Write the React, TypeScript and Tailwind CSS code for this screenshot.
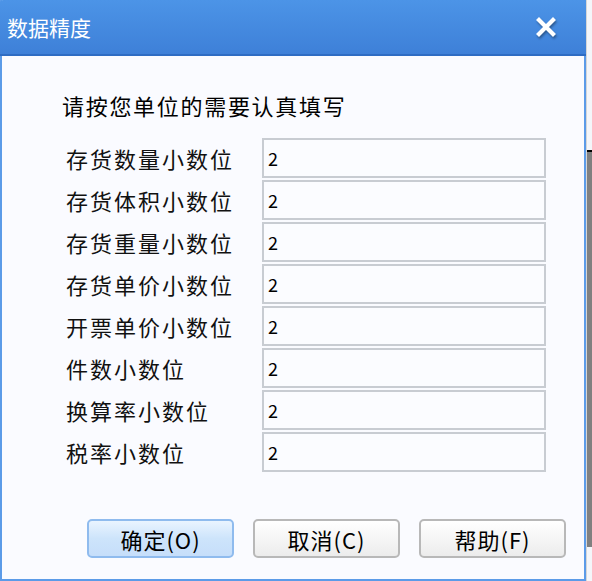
import React from 'react';

const rows = [
  '存货数量小数位',
  '存货体积小数位',
  '存货重量小数位',
  '存货单价小数位',
  '开票单价小数位',
  '件数小数位',
  '换算率小数位',
  '税率小数位',
];

const font = { fontFamily: '"Noto Sans CJK SC", "Liberation Sans", sans-serif' };

export default function App() {
  return (
    <div className="flex w-[592px] h-[581px] bg-[#f0f0f0] overflow-hidden" style={font}>
      {/* Dialog */}
      <div className="flex flex-col w-[586px] h-[581px] bg-[#fafbff] border-l-2 border-r-2 border-b-2 border-[#5b9be8]">
        {/* Title bar */}
        <div className="flex items-center justify-between h-[56px] -mx-[2px] pl-[7px] pr-[30px] bg-gradient-to-b from-[#4c94e7] to-[#3e80d8] border-b-2 border-[#2e6cc3] rounded-tl-[3px]">
          <span className="text-[21px] text-white leading-none">数据精度</span>
          <svg width="20" height="20" viewBox="0 0 20 20" className="drop-shadow-[1px_2px_1px_rgba(0,0,0,0.35)]">
            <path d="M3 3 L17 17 M17 3 L3 17" stroke="#ffffff" strokeWidth="4.2" strokeLinecap="square" />
          </svg>
        </div>

        {/* Body */}
        <div className="flex flex-col flex-1 pl-[60px] pt-[34px]">
          <div className="text-[22px] leading-[30px] text-black tracking-[1.7px]">请按您单位的需要认真填写</div>
          <div className="flex flex-col gap-[2px] mt-[18px] pl-[4px]">
            {rows.map((r) => (
              <div key={r} className="flex items-center h-[40px]">
                <span className="w-[196px] text-[22px] text-[#111] tracking-[2px] leading-none">{r}</span>
                <div className="flex items-center w-[284px] h-[40px] border-2 border-[#c8ccd2] bg-[#fbfcff] pl-[4px] text-[18px] text-black leading-none">
                  2
                </div>
              </div>
            ))}
          </div>

          {/* Buttons */}
          <div className="flex gap-[19px] mt-[47px] pl-[25px]">
            <button className="w-[147px] h-[39px] rounded-[5px] border-2 border-[#8fbbee] bg-gradient-to-b from-[#eaf4ff] via-[#cde4fb] to-[#c6defa] text-[22px] tracking-[1px] text-black leading-none">
              确定(O)
            </button>
            <button className="w-[147px] h-[39px] rounded-[5px] border-2 border-[#b8b8b8] bg-gradient-to-b from-[#ffffff] to-[#ececec] text-[22px] tracking-[1px] text-black leading-none">
              取消(C)
            </button>
            <button className="w-[147px] h-[39px] rounded-[5px] border-2 border-[#b8b8b8] bg-gradient-to-b from-[#ffffff] to-[#ececec] text-[22px] tracking-[1px] text-black leading-none">
              帮助(F)
            </button>
          </div>
        </div>
      </div>

      {/* Right background strip */}
      <div className="flex flex-col w-[6px] h-[581px] bg-[#f4f6fa] border-l border-[#d6d6d6]">
        <div className="h-[150px]" />
        <div className="h-[397px] bg-[#808080] border-t-2 border-black" />
      </div>
    </div>
  );
}
